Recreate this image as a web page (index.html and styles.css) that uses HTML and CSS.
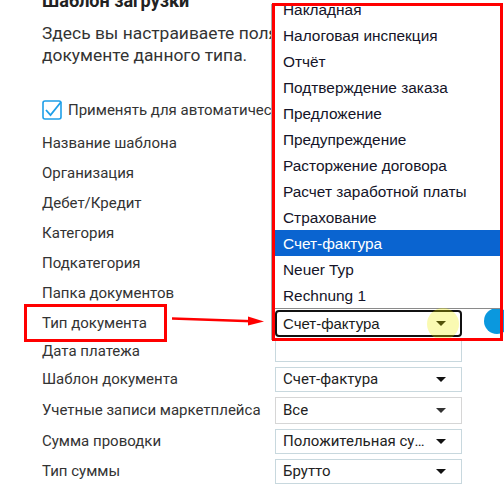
FILE: index.html
```html
<!DOCTYPE html>
<html lang="ru">
<head>
<meta charset="utf-8">
<link rel="stylesheet" href="styles.css">
</head>
<body>
<div class="content">
  <h1 class="title">Шаблон загрузки</h1>
  <p class="desc"><span class="nowrap">Здесь вы настраиваете поля, которые будут заполнены в</span><br>документе данного типа.</p>
  <div class="check-row">
    <svg class="checkbox" width="20" height="20" viewBox="0 0 20 20"><rect x="1" y="1" width="18" height="18" rx="2" fill="none" stroke="#1e9fe8" stroke-width="1.6"/><path d="M4 10 L8.5 15 L19 2" fill="none" stroke="#1e9fe8" stroke-width="1.8"/></svg>
    <span class="check-label">Применять для автоматической обработки</span>
  </div>
  <div class="form">
    <div class="row"><span class="label">Название шаблона</span><div class="input"></div></div>
    <div class="row"><span class="label">Организация</span><div class="input"></div></div>
    <div class="row"><span class="label">Дебет/Кредит</span><div class="input"></div></div>
    <div class="row"><span class="label">Категория</span><div class="input"></div></div>
    <div class="row"><span class="label">Подкатегория</span><div class="input"></div></div>
    <div class="row"><span class="label">Папка документов</span><div class="input"></div></div>
    <div class="row"><span class="label">Тип документа</span><div class="select select--focus"><span class="sel-text sel-text--list">Счет-фактура</span><span class="arrow"></span></div></div>
    <div class="row row--short"><span class="label">Дата платежа</span><div class="input input--date"></div></div>
    <div class="row"><span class="label">Шаблон документа</span><div class="select"><span class="sel-text">Счет-фактура</span><span class="arrow"></span></div></div>
    <div class="row row--tall"><span class="label">Учетные записи маркетплейса</span><div class="select select--gray"><span class="sel-text">Все</span><span class="arrow"></span></div></div>
    <div class="row"><span class="label">Сумма проводки</span><div class="select"><span class="sel-text">Положительная сумма</span><span class="arrow"></span></div></div>
    <div class="row"><span class="label">Тип суммы</span><div class="select"><span class="sel-text">Брутто</span><span class="arrow"></span></div></div>
  </div>
</div>

<div class="help-dot"></div>
<ul class="list">
  <li>Накладная</li>
  <li>Налоговая инспекция</li>
  <li>Отчёт</li>
  <li>Подтверждение заказа</li>
  <li>Предложение</li>
  <li>Предупреждение</li>
  <li>Расторжение договора</li>
  <li>Расчет заработной платы</li>
  <li>Страхование</li>
  <li class="selected">Счет-фактура</li>
  <li>Neuer Typ</li>
  <li>Rechnung 1</li>
</ul>
<div class="cursor-glow"></div>
<div class="mark mark--list"></div>
<div class="mark mark--label"></div>
<svg class="mark-arrow" width="96" height="14" viewBox="0 0 96 14"><path d="M0 4.5 L80 7.2" stroke="#f00" stroke-width="2.6" fill="none"/><path d="M76 2.5 L92 7.5 L76 11.5 Z" fill="#f00"/></svg>
</body>
</html>
```
FILE: styles.css
```css
html, body {
  margin: 0;
  padding: 0;
}
body {
  width: 504px;
  height: 492px;
  overflow: hidden;
  position: relative;
  background: #fff;
  font-family: Roboto, "Liberation Sans", sans-serif;
  color: #333;
}
.content {
  padding-left: 42px;
}
.title {
  margin: -10px 0 0;
  font-size: 18px;
  line-height: 22px;
  font-weight: 700;
  color: #222;
}
.desc {
  margin: 10px 0 0;
  font-size: 17.4px;
  line-height: 22px;
  color: #333;
}
.nowrap {
  white-space: nowrap;
}
.check-row {
  margin-top: 33px;
  height: 22px;
  display: flex;
  align-items: center;
  gap: 6px;
  white-space: nowrap;
}
.checkbox {
  flex: none;
  display: block;
}
.check-label {
  font-size: 15px;
  color: #333;
}
.form {
  margin-top: 7px;
}
.row {
  display: flex;
  align-items: center;
  height: 30px;
}
.row--short {
  height: 26px;
}
.row--tall {
  height: 32px;
}
.label {
  width: 233px;
  flex: none;
  font-size: 15px;
  color: #333;
  white-space: nowrap;
}
.input {
  width: 187px;
  height: 25px;
  box-sizing: border-box;
  border: 1px solid #c8d8de;
}
.input--date {
  height: 22px;
}
.select {
  width: 187px;
  height: 25px;
  box-sizing: border-box;
  border: 1px solid #c8d8de;
  display: flex;
  align-items: center;
  justify-content: space-between;
  padding: 0 15px 0 7px;
  font-size: 15px;
  color: #222;
}
.select--gray {
  height: 27px;
  border-color: #d6d6d6;
}
.select--focus {
  height: 27px;
  border: 2px solid #111;
  border-radius: 4px;
  padding: 0 14px 0 6px;
}
.sel-text {
  overflow: hidden;
  text-overflow: ellipsis;
  white-space: nowrap;
  max-width: 142px;
}
.sel-text--list {
  font-family: "Liberation Sans", Arial, sans-serif;
  color: #1a1a1a;
}
.arrow {
  flex: none;
  width: 0;
  height: 0;
  border-left: 5px solid transparent;
  border-right: 5px solid transparent;
  border-top: 5px solid #111;
}
.select--gray .arrow {
  border-top-color: #333;
}
.list {
  position: absolute;
  left: 275px;
  top: -4px;
  width: 225px;
  margin: 0;
  padding: 0;
  list-style: none;
  background: #fff;
  border-bottom: 1px solid #8a8a8a;
  font-family: "Liberation Sans", Arial, sans-serif;
  font-size: 15.4px;
  color: #141428;
  z-index: 2;
}
.list li {
  height: 26px;
  line-height: 28px;
  padding-left: 8px;
  white-space: nowrap;
  overflow: hidden;
}
.list li.selected {
  background: #0a64d0;
  color: #fff;
}
.help-dot {
  position: absolute;
  left: 484px;
  top: 308px;
  width: 26px;
  height: 26px;
  border-radius: 50%;
  background: #0a98de;
  z-index: 1;
}
.cursor-glow {
  position: absolute;
  left: 427px;
  top: 308px;
  width: 32px;
  height: 32px;
  border-radius: 50%;
  background: rgba(240, 240, 0, 0.3);
  z-index: 3;
}
.mark {
  position: absolute;
  box-sizing: border-box;
  border: 3px solid #f00;
  z-index: 4;
}
.mark--list {
  left: 272px;
  top: 3px;
  width: 231px;
  height: 338px;
  box-shadow: -2px 0 0 -1px #aaa;
}
.mark--label {
  left: 24px;
  top: 304px;
  width: 143px;
  height: 38px;
}
.mark-arrow {
  position: absolute;
  left: 172px;
  top: 314px;
  z-index: 4;
}
```
